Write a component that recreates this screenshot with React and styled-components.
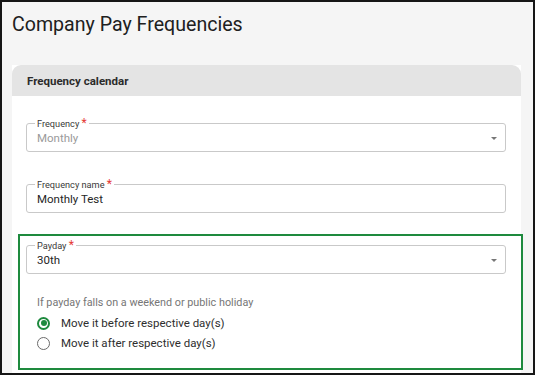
import React from 'react';
import styled, { createGlobalStyle } from 'styled-components';

const GlobalStyle = createGlobalStyle`
  html, body {
    margin: 0;
    padding: 0;
    background: #ffffff;
  }
  * {
    box-sizing: border-box;
  }
`;

const App = () => {
  return (
    <>
      <GlobalStyle />
      <FRAME>
        <TITLE>Company Pay Frequencies</TITLE>
        <CARD>
          <CARDHEAD>Frequency calendar</CARDHEAD>
          <CARDBODY>
            <Field label="Frequency" value="Monthly" disabled select />
            <Field label="Frequency name" value="Monthly Test" />
            <HIGHLIGHT>
              <Field label="Payday" value="30th" select />
              <HINT>If payday falls on a weekend or public holiday</HINT>
              <RADIOS>
                <RADIOROW>
                  <RADIO checked />
                  <RADIOLABEL>Move it before respective day(s)</RADIOLABEL>
                </RADIOROW>
                <RADIOROW>
                  <RADIO />
                  <RADIOLABEL>Move it after respective day(s)</RADIOLABEL>
                </RADIOROW>
              </RADIOS>
            </HIGHLIGHT>
          </CARDBODY>
        </CARD>
      </FRAME>
    </>
  );
};

const Field = ({ label, value, disabled, select }) => {
  return (
    <FIELDSET>
      <LEGEND>
        {label} <STAR>*</STAR>
      </LEGEND>
      <FIELDROW>
        <VALUE $disabled={disabled}>{value}</VALUE>
        {select && <ARROW />}
      </FIELDROW>
    </FIELDSET>
  );
};

const FRAME = styled.div`
  width: 535px;
  height: 375px;
  border: 2px solid #161616;
  background: #f5f5f5;
  overflow: hidden;
  font-family: Roboto, 'Liberation Sans', sans-serif;
`;

const TITLE = styled.h1`
  margin: 0;
  padding: 11px 0 0 10px;
  height: 63px;
  font-size: 19.6px;
  font-weight: 400;
  line-height: 24px;
  color: #202020;
`;

const CARD = styled.div`
  margin: 0 12px 0 10px;
  background: #ffffff;
`;

const CARDHEAD = styled.div`
  height: 31px;
  display: flex;
  align-items: center;
  padding-left: 15px;
  background: #e4e4e4;
  border-radius: 9px 9px 0 0;
  font-size: 11.5px;
  font-weight: 700;
  color: #2b2b2b;
`;

const CARDBODY = styled.div`
  display: flex;
  flex-direction: column;
  gap: 26px;
  padding: 21px 15px 10px 14px;
`;

const FIELDSET = styled.fieldset`
  margin: 0;
  min-width: 0;
  padding: 0 7px 4px 10px;
  border: 1px solid #c9c9c9;
  border-radius: 3px;
`;

const LEGEND = styled.legend`
  margin-left: -2px;
  padding: 0 2px;
  font-size: 9.2px;
  line-height: 12px;
  color: #3a3a3a;
`;

const STAR = styled.span`
  color: #e53935;
  font-size: 12px;
`;

const FIELDROW = styled.div`
  display: flex;
  align-items: center;
  height: 17px;
`;

const VALUE = styled.div`
  flex: 1;
  font-size: 11.5px;
  line-height: 17px;
  color: ${(p) => (p.$disabled ? '#9a9a9a' : '#262626')};
`;

const ARROW = styled.span`
  width: 0;
  height: 0;
  margin-right: 1px;
  border-left: 3.5px solid transparent;
  border-right: 3.5px solid transparent;
  border-top: 3.5px solid #777777;
`;

const HIGHLIGHT = styled.div`
  margin: -5px -17px 0 -8px;
  padding: 3px 15px 15px 6px;
  border: 2px solid #1e8a3e;
`;

const HINT = styled.div`
  margin-top: 21px;
  padding-left: 11px;
  font-size: 10.8px;
  line-height: 16px;
  color: #767676;
`;

const RADIOS = styled.div`
  display: flex;
  flex-direction: column;
  margin-top: 2px;
`;

const RADIOROW = styled.div`
  display: flex;
  align-items: center;
  gap: 11px;
  height: 20px;
  padding-left: 11px;
`;

const RADIO = styled.span`
  width: 13px;
  height: 13px;
  border-radius: 50%;
  border: ${(p) => (p.checked ? '2px solid #1e8a3e' : '1.5px solid #6b6b6b')};
  background: #ffffff;
  display: flex;
  align-items: center;
  justify-content: center;

  &::after {
    content: '';
    display: ${(p) => (p.checked ? 'block' : 'none')};
    width: 6px;
    height: 6px;
    border-radius: 50%;
    background: #1e8a3e;
  }
`;

const RADIOLABEL = styled.span`
  font-size: 11.5px;
  color: #2e2e2e;
`;

export default App;
